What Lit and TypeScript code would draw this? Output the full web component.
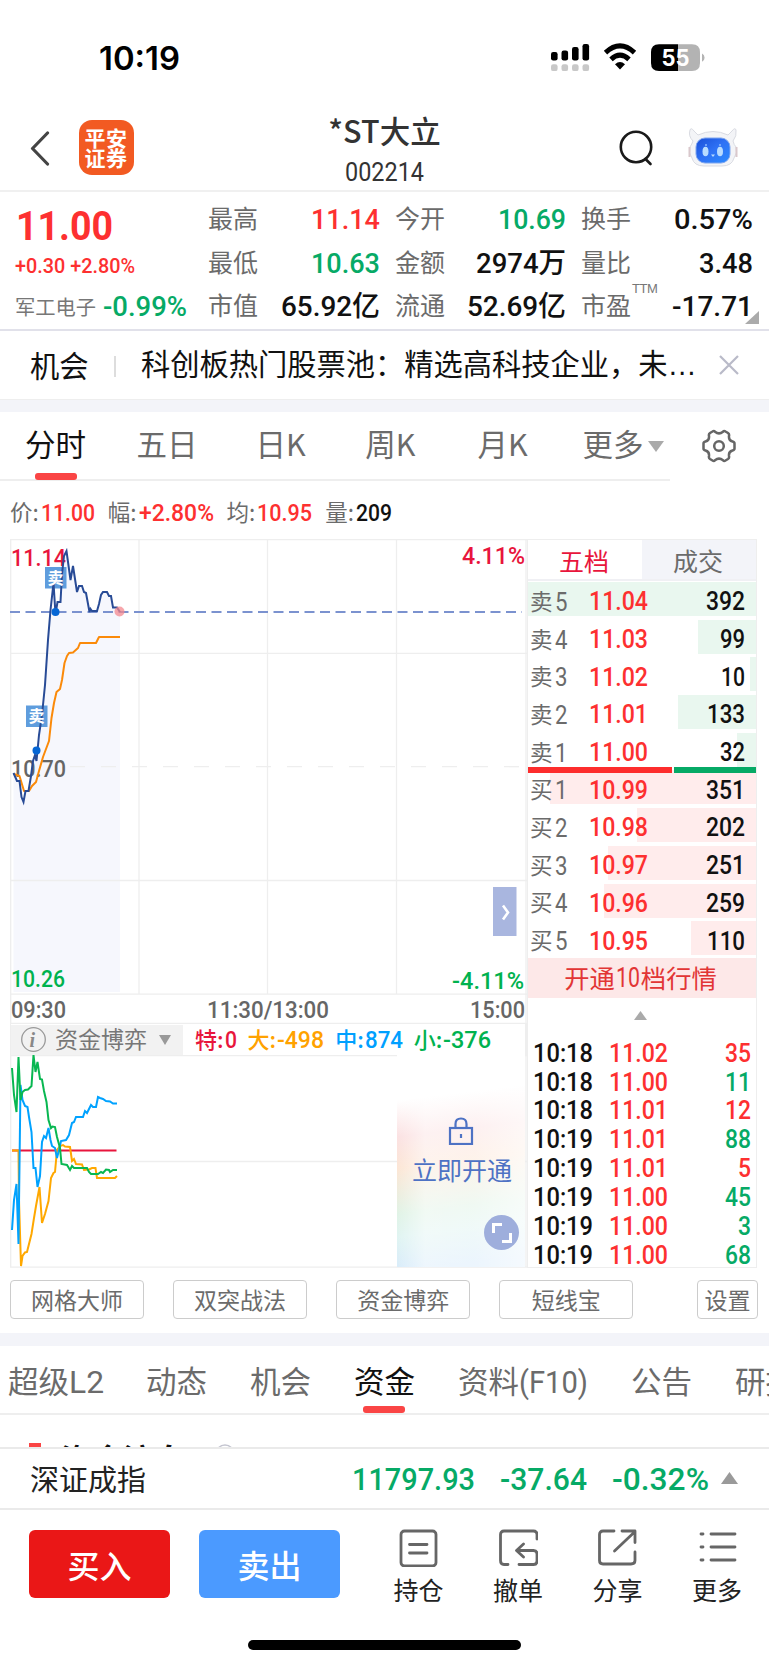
import { LitElement, html, svg, css } from "lit";
import { customElement, property } from "lit/decorators.js";

@customElement("fig-text")
class FigText extends LitElement {
  @property() text = "";
  @property({ type: Number }) w = 60;
  @property({ type: Number }) size = 26;
  @property({ type: Number }) weight = 500;
  static styles = css`
    :host { display: inline-block; line-height: 0; flex: none; }
    svg { display: block; overflow: visible; }
    text { font-family: Roboto, "Noto Sans CJK SC", sans-serif; fill: currentColor; }
  `;
  render() {
    const h = Math.round(this.size * 0.72);
    return html`<svg width=${this.w} height=${h}>
      <text x="0" y=${h} font-size=${this.size} font-weight=${this.weight}
        textLength=${this.w} lengthAdjust="spacingAndGlyphs">${this.text}</text>
    </svg>`;
  }
}

const fig = (text: string, w: number, size = 26, weight = 500) =>
  html`<fig-text .text=${text} .w=${w} .size=${size} .weight=${weight}></fig-text>`;

@customElement("status-bar")
class StatusBar extends LitElement {
  static styles = css`
    :host { display: flex; height: 115px; align-items: center; padding: 0 65px 0 100px; justify-content: space-between; box-sizing: border-box; color: #000; }
    svg { display: block; overflow: visible; }
    text { font-family: Inter, sans-serif; font-weight: 700; }
  `;
  render() {
    const xs = [0, 10.5, 21, 31.5];
    const tops = [8, 6.5, 3, 0];
    return html`
      <svg width="80" height="24"><text x="-1" y="23.500" font-size="32.5" style="font-weight:600" textLength="81" lengthAdjust="spacingAndGlyphs">10:19</text></svg>
      <svg width="153" height="28" viewBox="0 0 153 28">
        ${xs.map((x, i) => svg`<rect x=${x} y=${tops[i]} width="6.6" height=${16.5 - tops[i]} rx="2.2"/>
          <rect x=${x} y="20.3" width="6.6" height="6.8" rx="2.2" fill="#c8c8c8"/>`)}
        <path d="M54.500 8.600Q69 -4.800 83.500 8.600" fill="none" stroke="#000" stroke-width="5"/>
        <path d="M60 15.400Q69 7 78 15.400" fill="none" stroke="#000" stroke-width="5"/>
        <path d="M64 20.200Q69 16 74 20.200L69 25.600Z"/>
        <path d="M108 .3H127V27H108Q100 27 100 19V8.3Q100 .3 108 .3Z"/>
        <path d="M127 .3H141Q149 .3 149 8.3V19Q149 27 141 27H127Z" fill="#b3b3b3"/>
        <path d="M151 9.5Q153.6 11 153.6 13.7T151 17.8Z" fill="#b3b3b3"/>
        <text x="110.500" y="21.800" font-size="22.500" fill="#fff" textLength="28" lengthAdjust="spacingAndGlyphs">55</text>
      </svg>`;
  }
}

@customElement("title-bar")
class TitleBar extends LitElement {
  static styles = css`
    :host { display: grid; grid-template-columns: 1fr 130px 1fr; height: 77px; box-sizing: border-box; border-bottom: 2px solid #f0f0f0; color: #333; }
    .left { display: flex; align-items: flex-start; padding: 5px 0 0 30px; }
    .left svg { margin: 11px 28.500px 0 0; }
    .logo { width: 55px; height: 55px; border-radius: 13px; background: #f25a22; color: #fff; font: 700 21px/20px "Noto Sans CJK SC", sans-serif; text-align: center; padding-top: 7px; box-sizing: border-box; letter-spacing: .5px; }
    .mid { display: flex; flex-direction: column; align-items: center; }
    .name { font: 500 30.500px/32px "Noto Sans CJK SC", sans-serif; white-space: nowrap; margin: -1px 0 17px; }
    .right { display: flex; justify-content: flex-end; padding: 11px 31px 0 0; gap: 35px; }
    .right svg { overflow: visible; }
  `;
  render() {
    return html`
      <div class="left">
        <svg width="20" height="35" fill="none" stroke="#444" stroke-width="3.2" stroke-linecap="round" stroke-linejoin="round"><path d="M17.500 2L2.500 17.500L17.500 33"/></svg>
        <div class="logo">平安<br />证券</div>
      </div>
      <div class="mid"><div class="name">*ST大立</div>${fig("002214", 79, 25, 400)}</div>
      <div class="right">
        <svg width="34" height="37" fill="none" stroke="#1a1a1a" stroke-width="2.6" stroke-linecap="round"><circle cx="17" cy="21" r="15.200"/><path d="M26.500 33L31.500 38"/></svg>
        <svg width="50" height="42" viewBox="0 0 50 42">
          <defs><linearGradient id="f" x1="0" y1="0" x2="1" y2="1"><stop offset="0" stop-color="#1a4fd8"/><stop offset=".5" stop-color="#2f72f5"/><stop offset="1" stop-color="#2a8bff"/></linearGradient></defs>
          <path d="M2 4Q3 1 6 5L10 9Q25 2 40 9L44 5Q47 1 48 4Q49 10 45 15Q46 19 48 21Q50 27 46 32Q44 40 34 40H16Q6 40 4 32Q0 27 2 21Q4 18 5 15Q0 10 2 4Z" fill="#f3f4f7" stroke="#d9dbe2"/>
          <path d="M1.500 21V31M48.500 21V31" stroke="#d9c8cc" stroke-width="2"/>
          <rect x="8" y="12" width="34" height="25" rx="9" fill="url(#f)" stroke="#7fa6ef"/>
          <ellipse cx="17.500" cy="25.500" rx="3" ry="4.800" fill="#b9dcff"/><ellipse cx="32" cy="25.500" rx="3" ry="4.800" fill="#b9dcff"/>
          <path d="M23 28.500L25 31L27 28.500" fill="#b9dcff"/>
          <circle cx="18" cy="19" r="1" fill="#8bb8ff"/><circle cx="32" cy="19" r="1" fill="#8bb8ff"/>
        </svg>
      </div>`;
  }
}

type Cell = [string, string, number, string];
const CELLS: Cell[][] = [
  [["最高", "11.14", 69, "up"], ["今开", "10.69", 68, "down"], ["换手", "0.57%", 79, ""]],
  [["最低", "10.63", 69, "down"], ["金额", "2974万", 90, ""], ["量比", "3.48", 54, ""]],
  [["市值", "65.92亿", 99, ""], ["流通", "52.69亿", 99, ""], ["市盈", "-17.71", 81, ""]],
];

@customElement("quote-panel")
class QuotePanel extends LitElement {
  static styles = css`
    :host { display: grid; grid-template-columns: 193px 1fr; height: 139px; box-sizing: border-box; border-bottom: 2px solid #e1e1ea; padding: 5px 16px 0 15px; position: relative; font-family: "Noto Sans CJK SC", sans-serif; color: #111; }
    .up { color: #fd3030; } .down { color: #06aa66; display: flex; }
    .last { display: flex; flex-direction: column; padding-top: 13px; align-items: flex-start; }
    .last > :nth-child(1) { margin-left: 1px; }
    .last > :nth-child(2) { margin-top: 18px; }
    .sector { display: flex; align-items: center; gap: 7px; font-size: 20.300px; line-height: 24px; color: #777; margin-top: 21px; }
    .sector .down { padding-top: 1px; }
    .cells { display: grid; grid-template-columns: 172px 171px 172px; column-gap: 15px; grid-auto-rows: 43.500px; }
    .cell { display: flex; align-items: center; justify-content: space-between; }
    .cell > span { font-size: 25px; line-height: 36px; color: #6b6b6b; margin-top: -3px; }
    .cell b { display: flex; }
    sup { position: absolute; left: 632px; top: 89px; font: 13px/15px "Liberation Sans", sans-serif; color: #777; letter-spacing: -.5px; }
    .corner { position: absolute; right: 10px; bottom: 5px; }
  `;
  render() {
    return html`
      <div class="last up">${fig("11.00", 97, 41, 700)}${fig("+0.30 +2.80%", 120, 21, 500)}
        <div class="sector">军工电子<span class="down">${fig("-0.99%", 84, 27, 500)}</span></div>
      </div>
      <div class="cells">${CELLS.flat().map(([k, v, w, c]) => html`<div class="cell"><span>${k}</span><b class=${c}>${fig(v, w, 28.5, 500)}</b></div>`)}</div>
      <sup>TTM</sup><svg class="corner" width="14" height="13"><path d="M14 0V13H0Z" fill="#ababab"/></svg>`;
  }
}

@customElement("notice-row")
class NoticeRow extends LitElement {
  static styles = css`
    :host { display: flex; align-items: center; height: 69px; padding: 0 30px 3px; box-sizing: border-box; font: 29.250px/40px "Noto Sans CJK SC", sans-serif; color: #111; border-bottom: 1px solid #eee; }
    i { width: 2px; height: 21px; background: #ddd; margin: 6px 25.500px 0 25px; }
    .t { white-space: nowrap; }
    .t span { font-family: "Liberation Sans", sans-serif; }
    svg { margin: 3px 0 0 auto; }
  `;
  render() {
    return html`机会<i></i><div class="t">科创板热门股票池：精选高科技企业，未<span>…</span></div>
      <svg width="20" height="20" stroke="#b9bac8" stroke-width="2.2"><path d="M1 1L19 19M19 1L1 19"/></svg>`;
  }
}

@customElement("period-tabs")
class PeriodTabs extends LitElement {
  static styles = css`
    :host { display: flex; height: 69px; box-sizing: border-box; font: 30.500px/63px "Noto Sans CJK SC", sans-serif; color: #6b6b6b; }
    nav { display: flex; width: 670px; box-sizing: border-box; border-bottom: 2px solid #eee; padding-left: 25px; white-space: nowrap; }
    .on { color: #111; position: relative; }
    .on::after { content: ""; position: absolute; left: 10px; bottom: -1px; width: 42px; height: 7px; border-radius: 3px; background: #fa4545; }
    nav span:nth-child(2) { margin-left: 50.500px; } nav span:nth-child(3) { margin-left: 58px; }
    nav span:nth-child(4) { margin-left: 59.500px; } nav span:nth-child(5) { margin-left: 62px; }
    nav span:nth-child(6) { margin-left: 55px; }
    nav svg { margin: 29px 0 0 4px; }
    .gear { margin: 17px 0 0 32px; }
  `;
  render() {
    return html`<nav><span class="on">分时</span><span>五日</span><span>日K</span><span>周K</span><span>月K</span><span>更多</span>
        <svg width="16" height="12"><path d="M0 0H16L8 11Z" fill="#aaa"/></svg></nav>
      <svg class="gear" width="34" height="34" fill="none" stroke="#666" stroke-width="2.500" stroke-linejoin="round"><path d="M10.500 2.500Q12 1.500 13 2.800Q17 6 21 2.800Q22 1.500 23.500 2.500L26 4Q27.500 5 27 7Q26.500 11.500 30.500 12.500Q32.500 13 32.500 14.500V19.500Q32.500 21 30.500 21.500Q26.500 22.500 27 27Q27.500 29 26 30L23.500 31.500Q22 32.500 21 31.200Q17 28 13 31.200Q12 32.500 10.500 31.500L8 30Q6.500 29 7 27Q7.500 22.500 3.500 21.500Q1.500 21 1.500 19.500V14.500Q1.500 13 3.500 12.500Q7.500 11.500 7 7Q6.500 5 8 4Z"/><circle cx="17" cy="17" r="4.800"/></svg>`;
  }
}

@customElement("price-legend")
class PriceLegend extends LitElement {
  static styles = css`
    :host { display: flex; align-items: center; height: 58px; padding: 2px 0 0 10px; box-sizing: border-box; font: 22.500px/30px "Noto Sans CJK SC", sans-serif; color: #6b6b6b; }
    span { display: flex; align-items: center; gap: 2px; margin-right: 13px; }
    b { color: #fd3030; display: flex; padding-top: 2px; } b.k { color: #111; }
  `;
  render() {
    return html`<span>价:<b>${fig("11.00", 54, 23)}</b></span><span>幅:<b>${fig("+2.80%", 75, 23)}</b></span>
      <span>均:<b>${fig("10.95", 55, 23)}</b></span><span>量:<b class="k">${fig("209", 36, 23)}</b></span>`;
  }
}

/* Plot coordinates share the window's pixel scale; each viewBox starts at the plot's own corner. */
const PRICE = "13.500,773 17,781 19.500,781 21.500,797 23.500,802 25.500,791 28.500,791 31,776 33,761 35,755 36.500,761 39,735 42,715 45,685 48,640 50.500,610 53.500,583 55.500,614 57.500,602 60.500,602 62,574 64,556 66.500,551 70.500,580 73,566 77,592 79,586 82,586 84,592 86,593 89.500,612 90.500,609 92,611 97,611 99,604 101,595 103,592 107,592 109,596 111,596 113,607.500 117,607.500 120,612";
const AVG = "14,774 19.500,776 24,791 29,791 32,786 36,782 39,771 43,757 49,741 51.500,718 54,703 56.500,692 60,689 62,680 64.500,663 67,656 69,653 73,652.500 78,648 80,643 96,643 99,637 120,637";

@customElement("minute-chart")
class MinuteChart extends LitElement {
  static styles = css`
    :host { display: block; width: 517px; }
    svg { display: block; }
    text { font-family: Roboto, "Noto Sans CJK SC", sans-serif; }
    .tag { font-weight: 700; font-family: "Noto Sans CJK SC", sans-serif; }
  `;
  t(s: string, x: number, y: number, w: number, fill: string, weight = 500) {
    return svg`<text x=${x} y=${y} font-size="23.500" font-weight=${weight} fill=${fill} textLength=${w} lengthAdjust="spacingAndGlyphs">${s}</text>`;
  }
  render() {
    return html`<svg width="517" height="485" viewBox="10 539 517 485">
      <path d=${"M13.500,992 L" + PRICE.replace(/ /g, " L") + " V992Z"} fill="#f6f7fd"/>
      <g stroke="#eee" stroke-width="1.300" fill="none">
        <path d="M10 539.700H527M10.700 539V1024M139 539V994M267.500 539V994M396.500 539V994M526 539V1024M10 653.300H527M10 880.500H527M10 994.200H527"/>
        <path d="M70 766.700H527" stroke-dasharray="15 16"/>
        <path d="M10 1023.500H527" stroke-width="1.500"/>
      </g>
      ${this.t("11.14", 11, 566, 55, "#e8153c")}${this.t("10.70", 11, 776.5, 55, "#666")}
      ${this.t("4.11%", 462, 564, 63, "#e8153c")}${this.t("10.26", 11, 987, 54, "#00b24f")}${this.t("-4.11%", 452, 989, 72, "#00b24f")}
      ${this.t("09:30", 11, 1018, 55, "#666")}${this.t("11:30/13:00", 207, 1018, 122, "#666")}${this.t("15:00", 470, 1018, 55, "#666")}
      <path d="M10 612H522" stroke="#7b92cf" stroke-width="2" stroke-dasharray="10 5.500"/>
      <polyline points=${AVG} fill="none" stroke="#fb8a09" stroke-width="2" stroke-linejoin="round"/>
      <rect x="45" y="567" width="21.500" height="21.500" fill="#5f9ddd"/><rect x="26" y="705.500" width="21.500" height="21.500" fill="#5f9ddd"/>
      <polyline points=${PRICE} fill="none" stroke="#284b96" stroke-width="2"/>
      <text class="tag" x="47.500" y="583.500" font-size="16" fill="#fff">卖</text><text class="tag" x="28.500" y="722" font-size="16" fill="#fff">卖</text>
      <circle cx="55.500" cy="612" r="4" fill="#0566d5"/><circle cx="36.500" cy="750.500" r="4" fill="#0566d5"/>
      <circle cx="119.500" cy="611.500" r="5" fill="#f4888f" fill-opacity=".75"/>
      <rect x="493" y="887" width="23.500" height="49" fill="#a9b6df"/>
      <path d="M503 905.500L508 912.500L503 919.500" stroke="#fff" stroke-width="2.600" fill="none"/>
    </svg>`;
  }
}

@customElement("fund-chart")
class FundChart extends LitElement {
  static styles = css`
    :host { display: block; width: 517px; font-family: "Noto Sans CJK SC", sans-serif; }
    .head { display: flex; height: 31px; align-items: center; font-size: 23px; line-height: 26px; font-weight: 500; box-sizing: border-box; border-left: 1px solid #eee; border-right: 2px solid #eee; }
    .pick { display: flex; width: 172px; height: 30px; align-items: center; background: #f2f2f2; color: #777; font-weight: 400; margin-right: 12px; }
    .pick svg:first-child { margin: 0 9px 0 10px; } .pick svg:last-child { margin-left: 12px; }
    .pick div { margin-top: -4px; }
    .head > span { display: flex; align-items: center; margin-right: 11px; font-size: 22px; margin-top: -3px; gap: 1px; }
    .head fig-text { margin-top: 2px; }
    .plot { position: relative; height: 212px; }
    .plot svg.g { display: block; }
    .lock { position: absolute; left: 387px; top: 0; width: 128px; height: 212px; color: #4e72c4; text-align: center; font-size: 25px;
      background: linear-gradient(90deg, rgba(255,255,255,0) 0%, rgba(255,255,255,.55) 22%, rgba(255,255,255,.5) 60%, rgba(255,255,255,.75) 100%), linear-gradient(173deg, #fff 12%, #fff 20%, #fbe1e2 36%, #fce6d5 50%, #e0f3e6 70%, #e0f4f2 80%, #d8ebfb 95%, #d8ebfb 100%); }
    .lock svg { display: block; margin: 62px auto 0; }
    .lock div { line-height: 34px; margin-top: 7px; padding-left: 2px; }
    .full { position: absolute; left: 474px; top: 160px; }
  `;
  render() {
    const item = (k: string, v: string, w: number, c: string) => html`<span style="color:${c}">${k}:${fig(v, w, 23.5, 500)}</span>`;
    return html`<div class="head">
        <div class="pick"><svg width="25" height="25" fill="none" stroke="#999" stroke-width="1.300"><circle cx="12.500" cy="12.500" r="11.800"/><text x="8.500" y="19.500" font-size="20" font-style="italic" font-weight="700" font-family="Liberation Serif, serif" fill="#888" stroke="none">i</text></svg><div>资金博弈</div><svg width="12" height="10"><path d="M0 0H12L6 10Z" fill="#999"/></svg></div>
        ${item("特", "0", 12, "#e8153c")}${item("大", "-498", 47, "#ffa200")}${item("中", "874", 38, "#00a0ff")}${item("小", "-376", 48, "#00b24f")}
      </div>
      <div class="plot">
        <svg class="g" width="517" height="213" viewBox="10 1055 517 213" fill="none" stroke-width="2">
          <path d="M10 1055.500H527M10.700 1055V1267M526 1055V1267M10 1161.500H527M10 1267.200H527" stroke="#eee" stroke-width="1.300"/>
          <path d="M12 1150.500H116.500" stroke="#e8153c"/>
          <polyline stroke="#ffa800" points="12,1150.500 18.500,1150.500 19,1200 21,1266 22.500,1256 25,1252.500 27,1252 31.500,1234 34,1218 36,1206 39.500,1187 42,1223 45,1214 48.500,1201 51,1178 53.500,1173 55,1172 57,1150 60,1146 63,1145 65,1146.500 70,1147 72,1161 74,1159 76,1164 82,1164.500 84,1170 89,1169.500 92,1168 95.500,1168 97,1178 115,1178 117,1176"/>
          <polyline stroke="#00a2ff" points="12,1230 14,1200 16.500,1184 18.500,1244 20.500,1085 22.500,1100 25,1106 27.500,1107 29,1117 31.500,1132 33.500,1168 35.500,1168 37.500,1187 40,1176 42,1142 44,1136 46,1138 48.500,1128 50.500,1140 52,1146 55,1148 57,1158 59,1150 61,1141 66,1140 69,1135 72,1123 74,1122 76,1117 83,1117 85,1111 87,1113 91,1105 93,1107 96,1107 98,1097 100,1098 103,1099 106,1101 110,1101.500 113,1103.500 117,1103.500"/>
          <polyline stroke="#08b751" points="12,1068 14,1095 16.500,1112 18.500,1057 20.500,1100 22.500,1092 25,1090 28,1089.500 31.500,1086 33.500,1055 35.500,1072 37.500,1062 40,1079 42,1079.500 44,1091 46.500,1102 48.500,1120 51,1128 52.500,1126.500 55,1127 57,1137 60,1148 61.500,1164 67,1165 70,1170 72,1166 74,1168 87,1168 89,1172 91,1174 98,1174 101,1172 103,1173 106,1169.500 109,1170 110,1172 113,1170 117,1170"/>
        </svg>
        <div class="lock">
          <svg width="26" height="28" fill="none" stroke="#4e72c4" stroke-width="2.200"><rect x="2" y="11" width="22" height="16"/><path d="M7.500 11V7Q7.500 1.500 13 1.500T18.500 7V11M13 17V21"/></svg>
          <div>立即开通</div>
        </div>
        <svg class="full" width="36" height="36" fill="none"><circle cx="17.500" cy="17.500" r="17.500" fill="#9eaedc"/><path d="M9.500 18V9.500H18M26.500 18V26.500H18" stroke="#fff" stroke-width="3"/></svg>
      </div>`;
  }
}

const BOOK: [string, string, string, number, number, boolean][] = [
  ["卖5", "11.04", "392", 39, 229, true], ["卖4", "11.03", "99", 25, 58, true], ["卖3", "11.02", "10", 24, 6, true],
  ["卖2", "11.01", "133", 38, 78, true], ["卖1", "11.00", "32", 25, 19, true], ["买1", "10.99", "351", 39, 206, false],
  ["买2", "10.98", "202", 39, 119, false], ["买3", "10.97", "251", 39, 148, false], ["买4", "10.96", "259", 39, 152, false], ["买5", "10.95", "110", 38, 65, false],
];
const TICKS: [string, string, string, boolean][] = [
  ["10:18", "11.02", "35", true], ["10:18", "11.00", "11", false], ["10:18", "11.01", "12", true], ["10:19", "11.01", "88", false],
  ["10:19", "11.01", "5", true], ["10:19", "11.00", "45", false], ["10:19", "11.00", "3", false], ["10:19", "11.00", "68", false],
];

@customElement("order-book")
class OrderBook extends LitElement {
  static styles = css`
    :host { display: block; width: 230px; height: 729px; box-sizing: border-box; border: 1px solid #eee; font-family: "Noto Sans CJK SC", sans-serif; color: #111; }
    .tabs { display: grid; grid-template-columns: 1fr 1fr; height: 41px; box-sizing: border-box; border-bottom: 2px solid #f0f0f4; font-size: 25px; line-height: 41px; text-align: center; }
    .tabs span { color: #e8153c; height: 39px; padding-right: 2px; } .tabs span + span { background: #f3f4f9; color: #6b6b6b; }
    .row { position: relative; display: grid; grid-template-columns: 59px 1fr auto; align-items: center; height: 37.700px; padding: 3px 11px 0 2px; box-sizing: border-box; background: linear-gradient(#e9f7ef, #e9f7ef) no-repeat right 1px / var(--bar) 34px; }
    .row.buy { background-image: linear-gradient(#ffecec, #ffecec); }
    .row > span { display: flex; align-items: center; font-size: 22.500px; line-height: 30px; color: #6b6b6b; gap: 2px; }
    .row em { font-style: normal; margin-top: -3px; }
    .row > fig-text, .row > .r { margin-top: -1px; }
    .split { position: absolute; left: 0; right: 0; bottom: -3.500px; height: 6px; display: grid; grid-template-columns: 144px 1fr; gap: 2px; z-index: 1; }
    .split i { background: #fd2d2d; } .split i + i { background: #06aa66; }
    .r { color: #fd3030; display: flex; } .g { color: #06aa66; display: flex; }
    .ten { height: 40px; background: #fde8e8; color: #e23535; font-size: 25.300px; line-height: 40px; text-align: center; display: flex; justify-content: center; align-items: center; gap: 1px; padding-right: 3px; box-sizing: border-box; }
    .ten em { font-style: normal; margin-top: -2px; }
    .up { display: block; margin: 13px auto 18px 106px; }
    .tick { display: grid; grid-template-columns: 76px 1fr auto; height: 28.850px; align-items: center; padding: 0 5px 0 5px; }
  `;
  render() {
    return html`<div class="tabs"><span>五档</span><span>成交</span></div>
      ${BOOK.map(([k, p, v, w, bar, sell], i) => html`<div class="row ${sell ? "" : "buy"}" style="--bar:${bar}px">
        <span><em>${k[0]}</em>${fig(k[1], 12.5, 26, 400)}</span><div class="r">${fig(p, 59, 26)}</div>${fig(v, w, 26)}
        ${i === 4 ? html`<div class="split"><i></i><i></i></div>` : ""}</div>`)}
      <div class="ten"><em>开通</em>${fig("10", 24, 27, 400)}<em>档行情</em></div>
      <svg class="up" width="13" height="9"><path d="M0 9H13L6.500 0Z" fill="#aaa"/></svg>
      ${TICKS.map(([t, p, v, up]) => html`<div class="tick">${fig(t, 60, 26)}<div class="r">${fig(p, 59, 26)}</div><div class=${up ? "r" : "g"}>${fig(v, v.length * 13, 26)}</div></div>`)}`;
  }
}

@customElement("section-tabs")
class SectionTabs extends LitElement {
  static styles = css`
    :host { display: block; font-family: "Noto Sans CJK SC", sans-serif; color: #6b6b6b; }
    .tools { display: grid; grid-template-columns: repeat(4, 134px) 62px; column-gap: 29.100px; padding: 12px 10px 14px; font-size: 23px; text-align: center; }
    .tools span { border: 1.500px solid #ccc; border-radius: 4px; box-sizing: border-box; height: 39px; line-height: 36px; white-space: nowrap; }
    .tools span:last-child { margin-left: 34.500px; width: 61px; }
    .band { height: 13px; background: #f3f4f9; }
    nav { display: flex; height: 69px; box-sizing: border-box; border-bottom: 2px solid #eee; font-size: 30.500px; line-height: 69px; padding-left: 8px; white-space: nowrap; overflow: hidden; }
    nav span { margin-right: 43px; }
    nav span:nth-child(1) { margin-right: 42px; }
    nav .on { color: #111; position: relative; }
    .on::after { content: ""; position: absolute; left: 9px; bottom: 0; width: 42px; height: 7px; border-radius: 3px; background: #fa4545; }
    .peek { height: 32px; overflow: hidden; display: flex; align-items: flex-start; padding: 27px 0 0 29px; box-sizing: border-box; color: #111; }
    .peek i { width: 12px; height: 26px; background: #fa4545; margin: 1px 20px 0 0; flex: none; }
    .peek b { font-size: 31px; line-height: 38px; margin-top: -3px; }
    .peek svg { margin: 2px 0 0 30px; flex: none; }
  `;
  render() {
    return html`<div class="tools"><span>网格大师</span><span>双突战法</span><span>资金博弈</span><span>短线宝</span><span>设置</span></div>
      <div class="band"></div>
      <nav><span>超级${fig("L2", 35, 32, 400)}</span><span>动态</span><span>机会</span><span class="on">资金</span><span>资料${fig("(F10)", 69, 32, 400)}</span><span>公告</span><span>研报</span></nav>
      <div class="peek"><i></i><b>资金流向</b><svg width="20" height="20" fill="none" stroke="#c4c5d0" stroke-width="1.500"><circle cx="10" cy="10" r="9"/></svg></div>`;
  }
}

@customElement("bottom-bar")
class BottomBar extends LitElement {
  static styles = css`
    :host { display: block; font-family: "Noto Sans CJK SC", sans-serif; color: #222; background: #fff; }
    .index { display: flex; align-items: center; height: 63px; box-sizing: border-box; border: solid #eaeaea; border-width: 2px 0; padding: 1px 31px 0 30px; font-size: 29px; line-height: 40px; color: #06aa66; }
    .index b { color: #222; font-weight: 400; margin: -2px auto 0 0; }
    .index fig-text { margin-right: 25px; } .index fig-text:nth-of-type(3) { margin-right: 12px; }
    .index svg { margin-top: -2px; }
    .acts { display: flex; padding: 20px 0 0 29px; height: 110px; box-sizing: border-box; }
    .btn { width: 141px; height: 68px; border-radius: 6px; background: #ea1717; color: #fff; font-size: 32px; line-height: 69px; text-align: center; margin-right: 29px; font-weight: 500; }
    .btn.s { background: #4b9aff; }
    .it { width: 100px; display: flex; flex-direction: column; align-items: center; font-size: 25px; line-height: 32px; gap: 6px; margin-left: -.5px; }
    .it svg { display: block; margin-top: -1px; }
    .home { width: 273px; height: 10px; border-radius: 5px; background: #000; margin: 20px auto 0; }
  `;
  render() {
    const icons: [string, unknown][] = [
      ["持仓", svg`<rect x="2" y="2" width="35" height="35" rx="3.500"/><path d="M10.500 15.500H28M10.500 24H28"/>`],
      ["撤单", svg`<path d="M38 10V5.500Q38 2 34.500 2H5Q1.500 2 1.500 5.500V31.500Q1.500 35.500 5 35.500H9M20 35.500H34.500Q38 35.500 38 32V25Q38 21.500 34.500 21.500H18M24.500 15L17.500 21.500L24.500 28"/>`],
      ["分享", svg`<path d="M16 2H5Q1.500 2 1.500 5.500V31.500Q1.500 35 5 35H33Q37 35 37 31.500V23M24 2H37V13.500M36.500 3L16.500 22"/>`],
      ["更多", svg`<path d="M3 5H5M13 5H37M3 18H5M13 18H37M3 31H5M13 31H37"/>`],
    ];
    return html`<div class="index"><b>深证成指</b>${fig("11797.93", 123, 31, 500)}${fig("-37.64", 87, 31, 500)}${fig("-0.32%", 97, 31, 500)}
        <svg width="17" height="12"><path d="M0 12H17L8.500 0Z" fill="#9a9a9a"/></svg></div>
      <div class="acts"><div class="btn">买入</div><div class="btn s">卖出</div>
        ${icons.map(([n, i]) => html`<div class="it"><svg width="39" height="38" viewBox="0 0 39 38" fill="none" stroke="#666" stroke-width="2.800" stroke-linecap="round" stroke-linejoin="round">${i}</svg>${n}</div>`)}
      </div>
      <div class="home"></div>`;
  }
}

@customElement("app-root")
class AppRoot extends LitElement {
  static styles = css`
    :host { display: block; width: 769px; height: 1665px; overflow: hidden; background: #fff; }
    .band { height: 12px; background: #f3f4f9; }
    .market { display: grid; grid-template-columns: 517px 230px; padding-left: 10px; height: 729px; }
  `;
  render() {
    return html`<status-bar></status-bar><title-bar></title-bar><quote-panel></quote-panel><notice-row></notice-row>
      <div class="band"></div><period-tabs></period-tabs><price-legend></price-legend>
      <div class="market"><div><minute-chart></minute-chart><fund-chart></fund-chart></div><order-book></order-book></div>
      <section-tabs></section-tabs><bottom-bar></bottom-bar>`;
  }
}
